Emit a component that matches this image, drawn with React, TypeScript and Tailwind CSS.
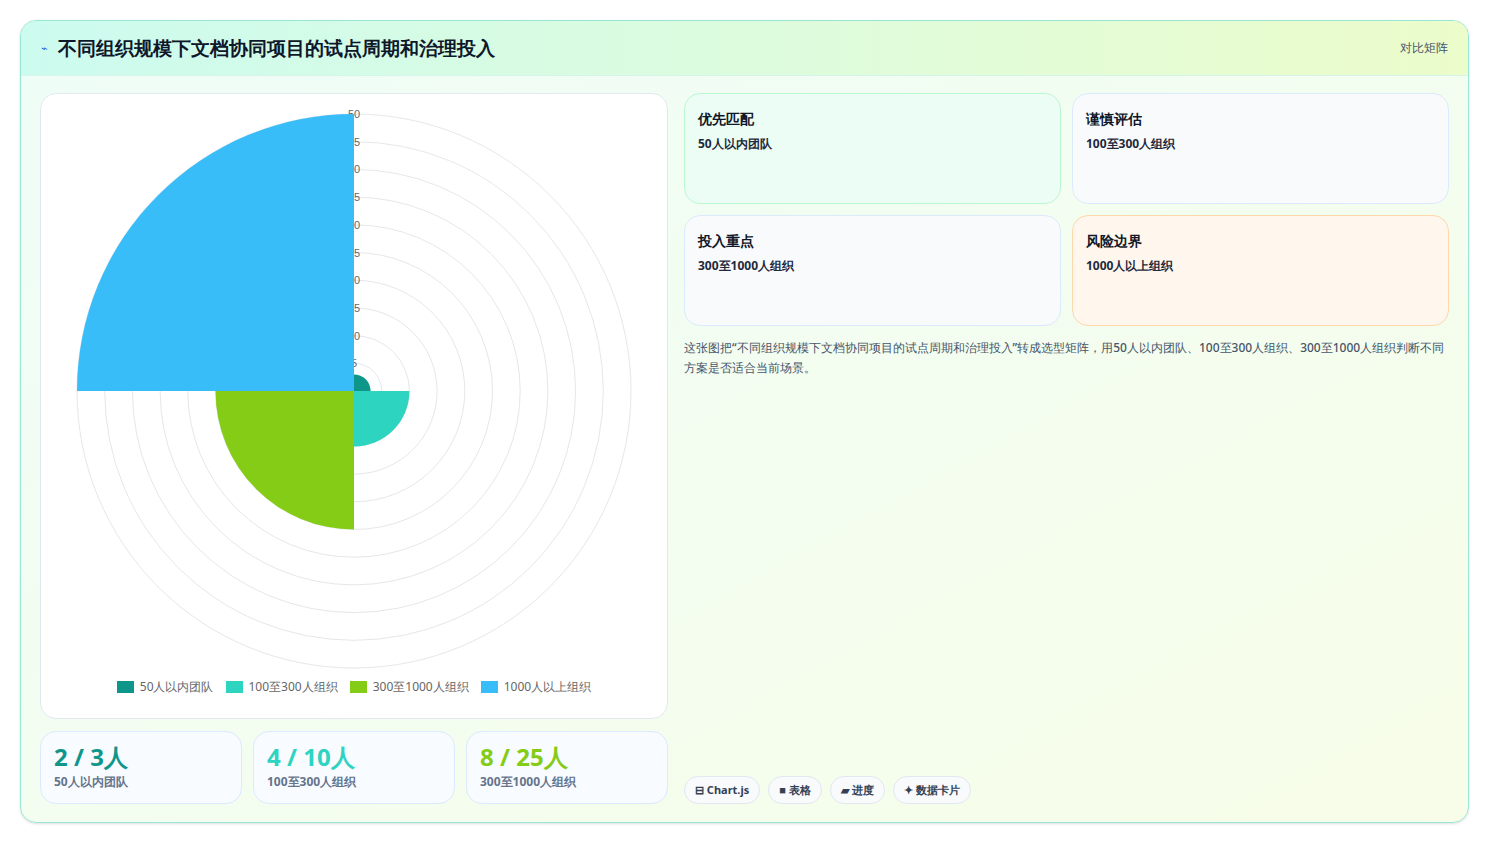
import React from 'react';

const R = 277;
const cx = 314;
const cy = 297;
const sc = (v: number) => (v / 50) * R;

const arc = (v: number, a0: number, a1: number) => {
  const r = sc(v);
  const p = (a: number) => [cx + r * Math.cos(a), cy + r * Math.sin(a)];
  const [x0, y0] = p(a0);
  const [x1, y1] = p(a1);
  return `M${cx} ${cy} L${x0} ${y0} A${r} ${r} 0 0 1 ${x1} ${y1} Z`;
};

const slices = [
  { v: 3, c: '#0f968a', a: -Math.PI / 2 },
  { v: 10, c: '#2dd4bf', a: 0 },
  { v: 25, c: '#84cc16', a: Math.PI / 2 },
  { v: 50, c: '#38bdf8', a: Math.PI },
];

const legend = [
  { l: '50人以内团队', c: 'bg-[#0f968a]' },
  { l: '100至300人组织', c: 'bg-[#2dd4bf]' },
  { l: '300至1000人组织', c: 'bg-[#84cc16]' },
  { l: '1000人以上组织', c: 'bg-[#38bdf8]' },
];

const stats = [
  { v: '2 / 3人', l: '50人以内团队', c: 'text-[#0f968a]' },
  { v: '4 / 10人', l: '100至300人组织', c: 'text-[#2dd4bf]' },
  { v: '8 / 25人', l: '300至1000人组织', c: 'text-[#84cc16]' },
];

const cards = [
  { t: '优先匹配', s: '50人以内团队', c: 'bg-[#ecfdf5] border-[#bbf7d0]' },
  { t: '谨慎评估', s: '100至300人组织', c: 'bg-[#f8fafc] border-[#dbeafe]' },
  { t: '投入重点', s: '300至1000人组织', c: 'bg-[#f8fafc] border-[#dbeafe]' },
  { t: '风险边界', s: '1000人以上组织', c: 'bg-[#fff7ed] border-[#fed7aa]' },
];

export default function App() {
  return (
    <div className="w-[1489px] h-[844px] bg-white p-5 pb-[21px] font-['Noto_Sans_CJK_SC',sans-serif]">
      <div className="h-full rounded-2xl border border-[#99e6d4] overflow-hidden flex flex-col bg-gradient-to-br from-[#effdf8] to-[#f7fde8] shadow-sm">
        <div className="h-[55px] shrink-0 flex items-center justify-between px-5 bg-gradient-to-r from-[#ccfbef] to-[#ecfccb] border-b border-[#d5f5ea]">
          <div className="flex items-center gap-2.5">
            <span className="text-[#2563eb] text-[11px]">⌁</span>
            <h1 className="text-[19px] font-bold text-[#0f172a]">不同组织规模下文档协同项目的试点周期和治理投入</h1>
          </div>
          <span className="text-[12px] text-[#475569]">对比矩阵</span>
        </div>
        <div className="flex-1 flex gap-4 px-[19px] pt-[17px] pb-[19px]">
          <div className="w-[628px] flex flex-col gap-3">
            <div className="h-[626px] bg-white rounded-2xl border border-[#e2e8f0] flex flex-col items-center">
              <svg width="628" height="590" className="mt-0">
                {Array.from({ length: 10 }, (_, i) => (
                  <circle key={i} cx={cx} cy={cy} r={sc((i + 1) * 5)} fill="none" stroke="#e5e7eb" strokeWidth="1" />
                ))}
                {Array.from({ length: 10 }, (_, i) => (
                  <text key={i} x={cx} y={cy - sc((i + 1) * 5) + 4} textAnchor="middle" fontSize="11" fill="#666" fontFamily="Liberation Sans, sans-serif">{(i + 1) * 5}</text>
                ))}
                {slices.map((s) => (
                  <path key={s.c} d={arc(s.v, s.a, s.a + Math.PI / 2)} fill={s.c} />
                ))}
              </svg>
              <div className="flex gap-3 text-[12px] text-[#666] mt-[-6px]">
                {legend.map((l) => (
                  <div key={l.l} className="flex items-center gap-1.5">
                    <span className={`w-[17px] h-[12px] ${l.c}`} />
                    {l.l}
                  </div>
                ))}
              </div>
            </div>
            <div className="grid grid-cols-3 gap-[11px]">
              {stats.map((s) => (
                <div key={s.l} className="h-[73px] rounded-2xl border border-[#dbeafe] bg-[#f8fbff] px-[13px] pt-[9px]">
                  <div className={`text-[24px] font-bold leading-[32px] ${s.c}`}>{s.v}</div>
                  <div className="text-[12px] font-bold text-[#64748b]">{s.l}</div>
                </div>
              ))}
            </div>
          </div>
          <div className="flex-1 flex flex-col">
            <div className="grid grid-cols-2 gap-x-[11px] gap-y-[11px]">
              {cards.map((c) => (
                <div key={c.t} className={`h-[111px] rounded-2xl border px-[13px] pt-[14px] ${c.c}`}>
                  <div className="text-[14px] font-bold text-[#0f172a]">{c.t}</div>
                  <div className="text-[12px] font-bold text-[#1e293b] mt-[6px]">{c.s}</div>
                </div>
              ))}
            </div>
            <p className="mt-[12px] text-[12px] leading-[20px] text-[#475569] font-medium">
              这张图把“不同组织规模下文档协同项目的试点周期和治理投入”转成选型矩阵，用50人以内团队、100至300人组织、300至1000人组织判断不同方案是否适合当前场景。
            </p>
            <div className="mt-auto flex gap-2 text-[11px] font-bold text-[#334155]">
              {['⊟ Chart.js', '■ 表格', '▰ 进度', '✦ 数据卡片'].map((t) => (
                <span key={t} className="h-[28px] px-[10px] flex items-center rounded-full border border-[#e2e8f0] bg-[#f8fafc]">{t}</span>
              ))}
            </div>
          </div>
        </div>
      </div>
    </div>
  );
}
